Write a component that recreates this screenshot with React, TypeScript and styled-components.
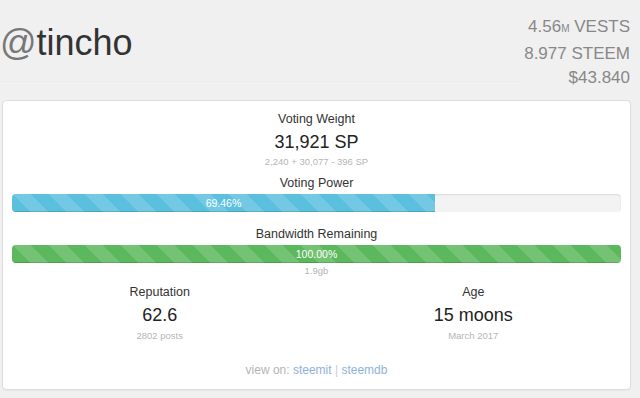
import React, { FC } from "react";
import styled, { createGlobalStyle } from "styled-components";

const GlobalStyle = createGlobalStyle`
  html, body {
    margin: 0;
    padding: 0;
    background: #f0f0f0;
    font-family: "Liberation Sans", Arial, sans-serif;
    color: #333;
  }
`;

const barColors = {
  blue: "#5bc0de",
  green: "#5cb85c",
};

const Page = styled.div`
  width: 640px;
  height: 398px;
  overflow: hidden;
`;

const Header = styled.div`
  display: flex;
  justify-content: space-between;
  align-items: flex-start;
  height: 100px;
  padding-right: 10px;
  box-sizing: border-box;
`;

const Name = styled.h1`
  flex: 0 1 520px;
  margin: 23px 0 0;
  height: 58px;
  font-size: 36px;
  line-height: 40px;
  font-weight: normal;
  color: #333;
  border-bottom: 1px solid #ebebeb;

  .at {
    color: #777;
  }
`;

const Balances = styled.div`
  flex-shrink: 0;
  padding-top: 15px;
  text-align: right;
  white-space: nowrap;
  font-size: 17px;
  line-height: 24.5px;
  color: #888;

  small {
    font-size: 10px;
    text-transform: uppercase;
  }
`;

const Card = styled.div`
  margin-left: 2px;
  width: 629px;
  box-sizing: border-box;
  padding: 9px 9px 10px;
  background: #fff;
  border: 1px solid #ddd;
  border-radius: 4px;
  box-shadow: 0 1px 1px rgba(0, 0, 0, 0.04);
  text-align: center;
`;

const Label = styled.div<{ gap?: number }>`
  margin-top: ${(p) => p.gap || 0}px;
  font-size: 12.5px;
  line-height: 17px;
  color: #333;
`;

const BigValue = styled.div`
  margin-top: 2px;
  font-size: 18px;
  line-height: 24px;
  color: #222;
`;

const Muted = styled.div<{ gap?: number }>`
  margin-top: ${(p) => p.gap || 0}px;
  font-size: 9.5px;
  line-height: 13px;
  color: #b5b5b5;
`;

const Track = styled.div<{ gap?: number }>`
  margin-top: ${(p) => p.gap || 0}px;
  height: 18px;
  background: #f3f3f3;
  border-radius: 4px;
  box-shadow: inset 0 1px 2px rgba(0, 0, 0, 0.1);
  overflow: hidden;
  display: flex;
`;

const Fill = styled.div<{ color: keyof typeof barColors }>`
  height: 100%;
  background-color: ${(p) => barColors[p.color]};
  background-image: linear-gradient(
    45deg,
    rgba(255, 255, 255, 0.15) 25%,
    transparent 25%,
    transparent 50%,
    rgba(255, 255, 255, 0.15) 50%,
    rgba(255, 255, 255, 0.15) 75%,
    transparent 75%,
    transparent
  );
  background-size: 36px 36px;
  box-shadow: inset 0 -1px 0 rgba(0, 0, 0, 0.15);
  color: #fff;
  font-size: 10.5px;
  line-height: 18px;
  text-align: center;
`;

const Stats = styled.div`
  display: grid;
  grid-template-columns: 1fr 1fr;
  margin: 7px -9px 0;
`;

const Stat = styled.div`
  display: flex;
  flex-direction: column;
  align-items: center;
`;

const Footer = styled.div`
  margin-top: 20px;
  font-size: 12px;
  line-height: 17px;
  color: #b5b5b5;

  a {
    color: #8db3d8;
    text-decoration: none;
  }

  .sep {
    color: #ccc;
  }
`;

type BarProps = {
  value: number;
  color: keyof typeof barColors;
  gap?: number;
};

const Bar: FC<BarProps> = ({ value, color, gap }) => (
  <Track gap={gap}>
    <Fill color={color} style={{ width: `${value}%` }}>
      {value.toFixed(2)}%
    </Fill>
  </Track>
);

const App: FC = () => {
  return (
    <Page>
      <GlobalStyle />
      <Header>
        <Name>
          <span className="at">@</span>tincho
        </Name>
        <Balances>
          <div>
            4.56<small>m</small> VESTS
          </div>
          <div>8.977 STEEM</div>
          <div>$43.840</div>
        </Balances>
      </Header>

      <Card>
        <Label gap={1}>Voting Weight</Label>
        <BigValue>31,921 SP</BigValue>
        <Muted gap={1}>2,240 + 30,077 - 396 SP</Muted>

        <Label gap={7}>Voting Power</Label>
        <Bar value={69.46} color="blue" gap={2} />

        <Label gap={14}>Bandwidth Remaining</Label>
        <Bar value={100} color="green" gap={2} />
        <Muted gap={1}>1.9gb</Muted>

        <Stats>
          <Stat>
            <Label>Reputation</Label>
            <BigValue>62.6</BigValue>
            <Muted gap={2}>2802 posts</Muted>
          </Stat>
          <Stat>
            <Label>Age</Label>
            <BigValue>15 moons</BigValue>
            <Muted gap={2}>March 2017</Muted>
          </Stat>
        </Stats>

        <Footer>
          view on: <a href="#">steemit</a> <span className="sep">|</span>{" "}
          <a href="#">steemdb</a>
        </Footer>
      </Card>
    </Page>
  );
};

export default App;
